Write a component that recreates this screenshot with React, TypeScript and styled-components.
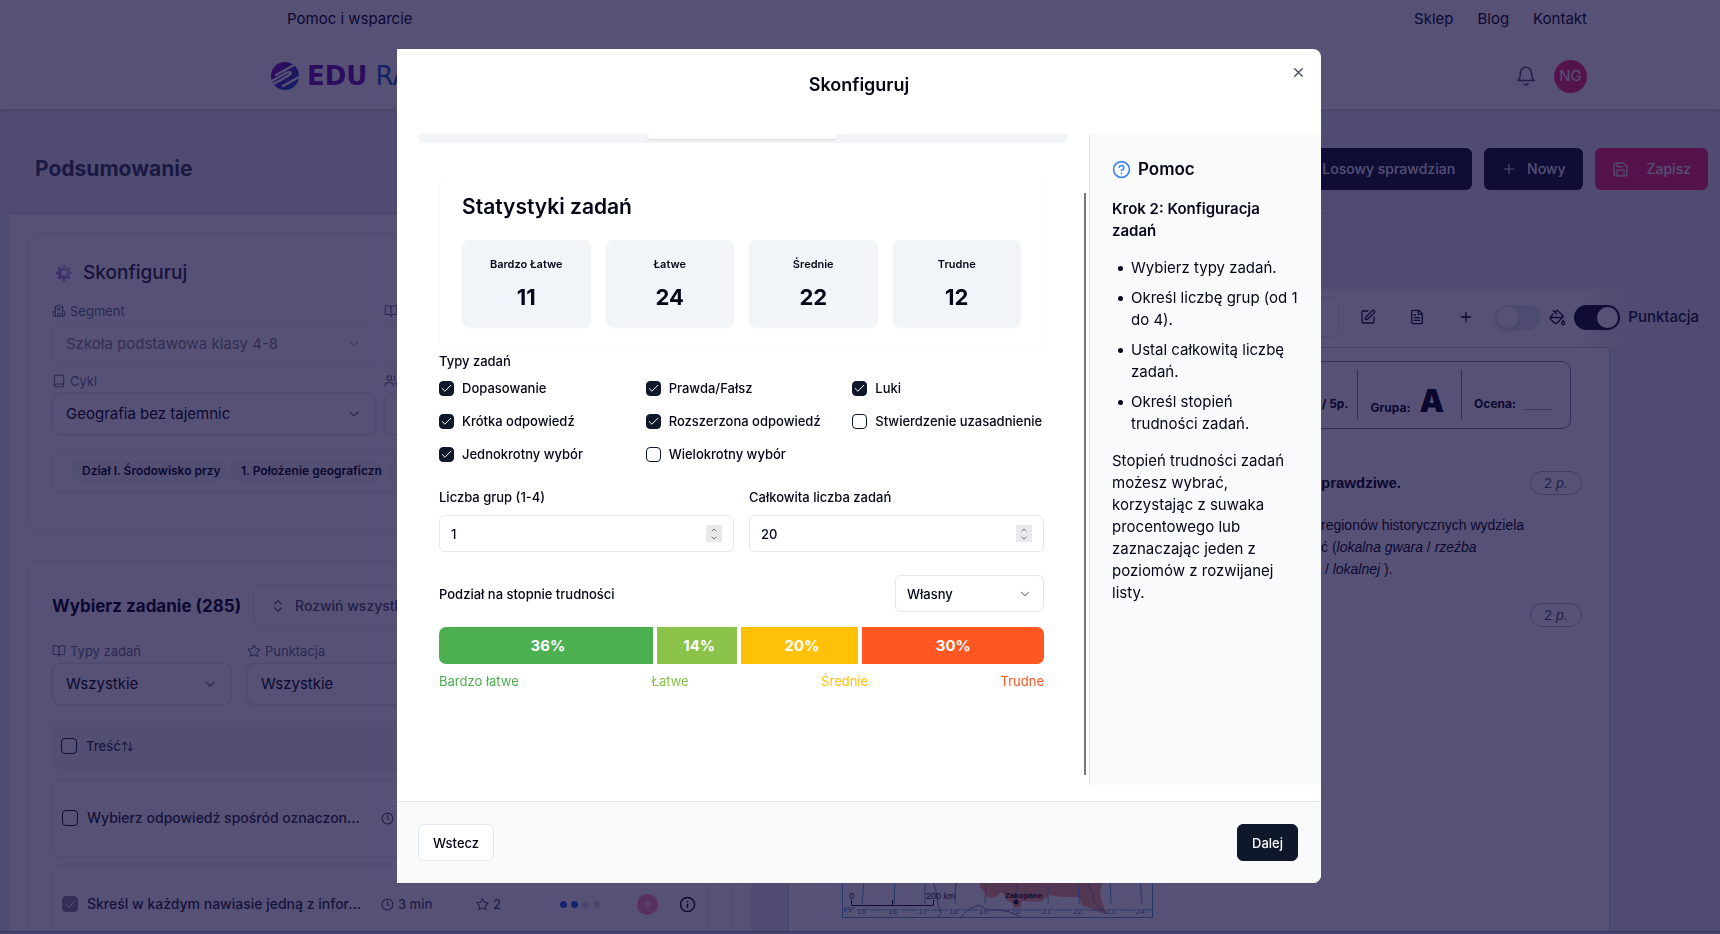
import React, { useState } from "react";
import styled, { createGlobalStyle, css } from "styled-components";
import {
  ArrowUpDown,
  Book,
  BookOpen,
  Check,
  ChevronDown,
  ChevronUp,
  ChevronsUpDown,
  CircleQuestionMark,
  Clock,
  FileText,
  Info,
  PaintBucket,
  Plus,
  Save,
  School,
  SquarePen,
  Star,
  Users,
  X,
} from "lucide-react";

const GlobalStyle = createGlobalStyle`
  *, *::before, *::after { box-sizing: border-box; }
  body {
    margin: 0;
    overflow: hidden;
    background: #e7e8f0;
    color: #020617;
    font-family: Inter, "Liberation Sans", sans-serif;
    font-size: 15px;
    line-height: 22px;
  }
  h1, h2, h3, h4, p, ul { margin: 0; padding: 0; }
  button, input, select { font: inherit; color: inherit; }
  svg { flex-shrink: 0; display: block; }
`;

/* ---------- page ---------- */

const Page = styled.div`
  display: flex;
  flex-direction: column;
  height: 100vh;
  overflow: hidden;
`;

const SiteHeader = styled.header`
  background: #fff;
  border-bottom: 1px solid #d8dde8;
  box-shadow: 0 1px 2px rgba(15, 23, 42, 0.1);
  padding: 0 117px 0 271px;
`;

const TopNav = styled.nav`
  display: flex;
  gap: 24px;
  height: 39px;
  align-items: center;
  padding: 0 16px;
  border-bottom: 1px solid #f3f5f8;

  a { color: #020617; text-decoration: none; }
  a:first-child { margin-right: auto; }
`;

const BrandRow = styled.div`
  display: flex;
  align-items: center;
  justify-content: space-between;
  height: 70px;
  padding: 4px 16px 0 0;
`;

const Brand = styled.a`
  display: flex;
  align-items: center;
  gap: 8px;
  color: #6b16b0;
  text-decoration: none;
  font-family: "DejaVu Sans", sans-serif;
  font-size: 26px;
  font-weight: 700;
`;

const BrandSecond = styled.span`
  color: #1462c4;
  font-weight: 400;
`;

const Account = styled.div`
  display: flex;
  align-items: center;
  gap: 17px;
  color: #475569;
`;

const Avatar = styled.button`
  width: 33px;
  height: 33px;
  padding: 0;
  border: 0;
  border-radius: 50%;
  background: #f52c72;
  color: #fff;
`;

const SummaryBar = styled.div`
  display: flex;
  align-items: center;
  justify-content: space-between;
  height: 104px;
  padding: 15px 12px 0 35px;
  border-bottom: 1px solid #ccd3de;
`;

const SummaryTitle = styled.h1`
  font-size: 21px;
  font-weight: 700;
  line-height: 28px;
  color: #334155;
`;

const ButtonGroup = styled.div`
  display: flex;
  gap: 12px;
`;

const ActionButton = styled.button<{ $pink?: boolean }>`
  display: flex;
  align-items: center;
  gap: ${(p) => (p.$pink ? 18 : 10)}px;
  height: 42px;
  padding: 0 17px;
  border: 0;
  border-radius: 6px;
  background: ${(p) => (p.$pink ? "#f52c72" : "#0f172a")};
  color: #f1f5f9;
  font-size: 14px;
  font-weight: 500;
`;

const Workspace = styled.div`
  display: grid;
  grid-template-columns: 741fr 969fr;
  flex: 1;
  min-height: 0;
  padding-left: 10px;
`;

const Side = styled.div`
  display: flex;
  flex-direction: column;
  gap: 26px;
  min-width: 0;
  overflow: hidden;
  padding: 18px 18px 0 17px;
  background: #fbfcfe;
`;

const Card = styled.section<{ $round: number }>`
  padding: 24px;
  flex-shrink: 0;
  background: #fff;
  border: 1px solid #e8ecf2;
  border-radius: ${(p) => p.$round}px;
`;

const ConfigTitle = styled.h2`
  display: flex;
  align-items: center;
  gap: 10px;
  height: 32px;
  margin-bottom: 12px;
  padding-left: 3px;
  font-size: 19px;
  font-weight: 500;
  color: #1e293b;
`;

const FieldGrid = styled.div<{ $columns: string; $gap: string }>`
  display: grid;
  grid-template-columns: ${(p) => p.$columns};
  gap: ${(p) => p.$gap};
`;

const Field = styled.div`
  display: flex;
  flex-direction: column;
  gap: 2px;
  min-width: 0;
`;

const FieldLabel = styled.label`
  display: flex;
  align-items: center;
  gap: 4px;
  height: 20px;
  font-size: 13px;
  line-height: 20px;
  color: #64748b;
  white-space: nowrap;
`;

const SelectShell = styled.div<{ $size: "large" | "small"; $faded?: boolean }>`
  display: grid;
  align-items: center;
  opacity: ${(p) => (p.$faded ? 0.5 : 1)};

  > * { grid-area: 1 / 1; }
  > svg {
    justify-self: end;
    margin-right: ${(p) => (p.$size === "large" ? 14 : 12)}px;
    pointer-events: none;
    color: #6b7280;
  }
  select {
    appearance: none;
    width: 100%;
    min-width: 0;
    opacity: 1;
    color: #020617;
    background: #fff;
    border: 1px solid #e2e8f0;
    ${(p) =>
      p.$size === "large"
        ? css`
            height: 42px;
            padding: 0 32px 0 13px;
            border-radius: 8px;
            box-shadow: 0 0 0 1px #eef1f5;
          `
        : css`
            height: 37px;
            padding: 0 32px 0 11px;
            border-radius: 6px;
            font-size: 13px;
          `}
  }
`;

const TagBox = styled.div`
  display: flex;
  align-items: center;
  gap: 4px;
  height: 42px;
  margin: 15px 0 17px;
  padding: 0 17px;
  overflow: hidden;
  border: 1px solid #e6eaf0;
  border-radius: 6px;
`;

const Tag = styled.span`
  flex: 0 0 155px;
  height: 22px;
  padding-left: 12px;
  border-radius: 11px;
  background: #f1f5f9;
  font-size: 12px;
  font-weight: 600;
  white-space: nowrap;
`;

const TaskHeading = styled.div`
  display: flex;
  align-items: center;
  gap: 12px;
  margin-bottom: 14px;

  h2 { font-size: 17px; font-weight: 700; }
`;

const ExpandButton = styled.button`
  display: flex;
  align-items: center;
  gap: 9px;
  height: 42px;
  padding: 0 16px;
  border: 1px solid #e2e8f0;
  border-radius: 8px;
  background: #fff;
  color: #475569;
  font-size: 14px;
  font-weight: 500;
`;

const TaskTable = styled.table`
  display: flex;
  flex-direction: column;
  gap: 8px;
  margin-top: 16px;

  thead { display: block; }
  tbody { display: flex; flex-direction: column; gap: 8px; }
  th, td { display: flex; align-items: center; gap: 4px; padding: 0; }
`;

const HeadRow = styled.tr`
  display: flex;
  align-items: center;
  gap: 9px;
  height: 50px;
  padding: 0 9px;
  border-radius: 8px;
  background: #f1f5f9;
  color: #334155;
  font-size: 13px;

  th { font-weight: 500; gap: 0; }
`;

const TaskRow = styled.tr`
  display: grid;
  grid-template-columns: 25px 294px 95px 84px 77px 42px 1fr;
  align-items: center;
  height: 78px;
  padding: 0 9px;
  border: 1px solid #e2e8f0;
  border-radius: 8px;
  font-size: 13px;
  font-weight: 500;
  color: #475569;
`;

const TaskName = styled.td`
  font-size: 14px;
  color: #1e293b;
  white-space: nowrap;
`;

const Dot = styled.i<{ $on?: boolean }>`
  width: 7px;
  height: 7px;
  border-radius: 50%;
  background: ${(p) => (p.$on ? "#2563eb" : "#d3d6de")};
`;

const AddButton = styled.button`
  display: grid;
  place-items: center;
  width: 21px;
  height: 21px;
  padding: 0;
  border: 0;
  border-radius: 50%;
  background: #fd8db6;
  color: #fff;
`;

const IconButton = styled.button<{ $width?: number }>`
  display: grid;
  place-items: center;
  width: ${(p) => p.$width ?? 40}px;
  height: 40px;
  padding: 0;
  border: 0;
  background: none;
  color: inherit;
`;

/* ---------- preview ---------- */

const Preview = styled.div`
  display: flex;
  flex-direction: column;
  min-width: 0;
  padding-top: 75px;
`;

const Toolbar = styled.div`
  display: flex;
  align-items: center;
  justify-content: flex-end;
  gap: 9px;
  height: 59px;
  flex-shrink: 0;
  padding: 0 21px 2px;
  border-bottom: 1px solid #dde2ea;
  background: linear-gradient(to left, #e7e8f0 90px, #fff 150px);
  color: #0f172a;
  font-weight: 500;
`;

const TitleInput = styled.input`
  width: 300px;
  height: 40px;
  border: 1px solid #e2e8f0;
  border-radius: 8px;
  background: #fff;
`;

const SwitchGroup = styled.div`
  display: flex;
  align-items: center;
  gap: 8px;
`;

const Switch = styled.input`
  appearance: none;
  display: flex;
  align-items: center;
  width: 46px;
  height: 25px;
  margin: 0;
  padding: 0 2px;
  border-radius: 13px;
  background: #e2e8f0;

  &::before {
    content: "";
    width: 21px;
    height: 21px;
    border-radius: 50%;
    background: #fff;
    box-shadow: 0 4px 10px rgba(15, 23, 42, 0.12);
  }
  &:checked { background: #0f172a; justify-content: flex-end; }
`;

const Sheet = styled.article`
  flex: 1;
  min-height: 0;
  overflow: hidden;
  margin: 0 111px 0 38px;
  padding: 13px 27px 0 53px;
  background: #fff;
  box-shadow: 0 0 2px #94a3b8;
  font-family: "Liberation Sans", Arial, sans-serif;
`;

const SheetHeader = styled.div`
  display: flex;
  justify-content: flex-end;
  align-items: stretch;
  height: 68px;
  margin: 0 11px 42px 0;
  padding: 8px 0;
  border: 1px solid #7c86a0;
  border-radius: 9px;
  font-family: Inter, sans-serif;
  font-size: 12px;
  font-weight: 700;
`;

const SheetCell = styled.div`
  display: flex;
  align-items: center;
  gap: 9px;
  padding: 18px 9px 0 12px;

  & + & { border-left: 1px solid #7c86a0; }
`;

const GroupCell = styled(SheetCell)`
  align-items: baseline;
  padding-right: 17px;
  padding-top: 20px;

  strong { font-size: 31px; }
`;

const GradeCell = styled(SheetCell)`
  padding-right: 17px;

  &::after {
    content: "";
    width: 28px;
    height: 12px;
    border-bottom: 1px solid #94a3b8;
  }
`;

const Question = styled.section`
  display: flex;
  justify-content: flex-end;
  margin-bottom: 23px;
`;

const QuestionBody = styled.div`
  flex: 0 0 261px;
`;

const QuestionTop = styled.div`
  display: flex;
  justify-content: space-between;
  align-items: center;
  height: 24px;
  font-weight: 700;
`;

const Points = styled.span`
  display: block;
  width: 52px;
  height: 24px;
  margin-left: auto;
  border: 1px solid #b3bac8;
  border-radius: 12px;
  color: #475569;
  font-size: 14px;
  font-weight: 400;
  text-align: center;
`;

const QuestionText = styled.p`
  padding-top: 19px;
  font-size: 14px;
  white-space: nowrap;
`;

const MapFrame = styled.figure`
  margin: 11px 0 0;
`;

const BottomStrip = styled.div`
  height: 3px;
  flex-shrink: 0;
  border-top: 1px solid #a5abc8;
  background: #c6cbee;
`;

/* ---------- dialog ---------- */

const Overlay = styled.div`
  position: fixed;
  inset: 0;
  display: flex;
  justify-content: center;
  padding: 49px 18px 51px 16px;
  background: rgba(16, 8, 59, 0.7);
`;

const Dialog = styled.div`
  display: flex;
  flex-direction: column;
  width: 100%;
  max-width: 924px;
  overflow: hidden;
  border-radius: 0 8px 8px 0;
  background: #fff;
`;

const DialogHeader = styled.div`
  display: grid;
  grid-template-columns: 40px 1fr 40px;
  height: 85px;
  flex-shrink: 0;
  padding: 8px 3px;

  h2 {
    align-self: center;
    padding-bottom: 14px;
    text-align: center;
    font-size: 18px;
    font-weight: 600;
  }
`;

const CloseButton = styled.button`
  display: grid;
  place-items: center;
  justify-self: end;
  width: 30px;
  height: 30px;
  margin-right: 5px;
  padding: 0;
  border: 0;
  background: none;
  color: #3f4454;
`;

const DialogBody = styled.div`
  display: flex;
  flex: 1;
  min-height: 0;
  margin-bottom: 16px;
`;

const FormPane = styled.div`
  flex: 1;
  min-width: 0;
  padding: 0 17px 0 21px;
  overflow: hidden;
`;

const ScrollThumb = styled.div`
  width: 2px;
  margin: 59px 3px 10px 0;
  background: #77777c;
`;

const TabBar = styled.div`
  display: flex;
  justify-content: center;
  height: 9px;
  padding-right: 2px;
  border-radius: 0 0 6px 6px;
  background: #f1f5f9;
`;

const ActiveTab = styled.div`
  width: 190px;
  height: 5px;
  border-radius: 0 0 4px 4px;
  background: #fff;
  box-shadow: 0 1px 2px rgba(15, 23, 42, 0.12);
`;

const Form = styled.form`
  display: flex;
  flex-direction: column;
  margin: 34px 23px 0 21px;
  font-size: 13px;
  line-height: 20px;
  font-weight: 500;
`;

const StatsCard = styled.section`
  padding: 16px 22px 23px;
  border: 1px solid #f9fafb;
  border-top-color: #fff;
  border-radius: 8px;

  h3 {
    margin-bottom: 20px;
    font-size: 21px;
    line-height: 26px;
    font-weight: 600;
  }
`;

const StatGrid = styled.div`
  display: grid;
  grid-template-columns: repeat(4, 1fr);
  gap: 15px;
`;

const Stat = styled.div`
  display: flex;
  flex-direction: column;
  align-items: center;
  gap: 9px;
  height: 87px;
  padding-top: 14px;
  border-radius: 8px;
  background: #f1f5f9;
  box-shadow: 0 1px 2px rgba(15, 23, 42, 0.05);
  font-size: 11px;
  font-weight: 600;

  strong { font-size: 22px; line-height: 28px; font-weight: 700; }
`;

const TypeGrid = styled.fieldset`
  display: grid;
  grid-template-columns: repeat(3, 1fr);
  gap: 13px 15px;
  margin: 0 0 23px;
  padding: 0;
  border: 0;

  legend { float: left; grid-column: 1 / -1; margin-bottom: -6px; padding: 0; }
`;

const CheckLabel = styled.label`
  display: flex;
  align-items: center;
  gap: 8px;
  white-space: nowrap;
`;

const CheckShell = styled.span<{ $size: number; $faded?: boolean }>`
  display: grid;
  place-items: center;
  opacity: ${(p) => (p.$faded ? 0.5 : 1)};

  > * { grid-area: 1 / 1; }
  > svg { color: #fff; pointer-events: none; }
  input {
    appearance: none;
    width: ${(p) => p.$size}px;
    height: ${(p) => p.$size}px;
    margin: 0;
    border: 1px solid #0f172a;
    border-radius: 4px;
    background: #fff;
  }
  input:checked { background: #0f172a; }
`;

const NumberField = styled.div`
  display: flex;
  flex-direction: column;
  gap: 8px;
`;

const NumberShell = styled.div`
  display: grid;
  align-items: center;

  > * { grid-area: 1 / 1; }
  input {
    appearance: textfield;
    width: 100%;
    height: 37px;
    padding: 0 32px 0 11px;
    border: 1px solid #e2e8f0;
    border-radius: 6px;
  }
  input::-webkit-inner-spin-button { appearance: none; }
`;

const Spinner = styled.span`
  display: flex;
  flex-direction: column;
  align-items: center;
  justify-content: center;
  justify-self: end;
  width: 16px;
  height: 17px;
  margin-right: 12px;
  background: #e9e9eb;
  color: #6f6f78;
`;

const SplitRow = styled.div`
  display: flex;
  align-items: center;
  justify-content: space-between;
  margin: 23px 0 15px;
`;

const SplitSelect = styled.div`
  width: 149px;
`;

const Bar = styled.div`
  display: flex;
  height: 37px;
  overflow: hidden;
  border-radius: 7px;
  color: #fff;
  font-size: 15px;
  font-weight: 700;
`;

const Segment = styled.div<{ $share: number; $color: string }>`
  display: grid;
  place-items: center;
  flex: 0 0 ${(p) => p.$share}%;
  background: ${(p) => p.$color};

  &:not(:last-child) { box-shadow: inset -4px 0 #fff; }
`;

const Legend = styled.div`
  display: flex;
  justify-content: space-between;
  margin-top: 7px;
  font-weight: 400;
`;

const LegendName = styled.span<{ $color: string }>`
  color: ${(p) => p.$color};
`;

const Help = styled.aside`
  flex: 0 0 232px;
  padding: 21px 20px 0 22px;
  border-left: 1px solid #e2e8f0;
  background: #f8fafc;

  h3 {
    display: flex;
    align-items: center;
    gap: 7px;
    height: 28px;
    font-size: 17px;
    font-weight: 600;
  }
  h4 { margin: 15px 0; font-size: 15px; font-weight: 600; }
`;

const HelpList = styled.ul`
  display: flex;
  flex-direction: column;
  gap: 8px;
  margin-bottom: 15px;
  padding-left: 6px;
  list-style: none;

  li { display: flex; gap: 8px; }
  li::before {
    content: "";
    flex: 0 0 5px;
    height: 5px;
    margin-top: 9px;
    border-radius: 50%;
    background: #020617;
  }
`;

const DialogFooter = styled.div`
  display: flex;
  align-items: center;
  justify-content: space-between;
  height: 82px;
  flex-shrink: 0;
  padding: 0 23px 0 21px;
  border-top: 1px solid #e2e8f0;
  background: #f8fafc;
`;

const FooterButton = styled.button<{ $primary?: boolean }>`
  height: 37px;
  padding: 0 14px;
  border: 1px solid ${(p) => (p.$primary ? "#0f172a" : "#e2e8f0")};
  border-radius: 6px;
  background: ${(p) => (p.$primary ? "#0f172a" : "#fff")};
  color: ${(p) => (p.$primary ? "#f8fafc" : "#020617")};
  font-size: 13px;
  font-weight: 500;
`;

/* ---------- drawings ---------- */

const LogoMark = () => (
  <svg width="28" height="28" viewBox="0 0 28 28" aria-hidden="true">
    <defs>
      <linearGradient id="logo-fill" x1="0" y1="0" x2="1" y2="1">
        <stop offset="0.2" stopColor="#7a14ae" />
        <stop offset="0.8" stopColor="#1a4fc0" />
      </linearGradient>
      <clipPath id="logo-clip"><circle cx="14" cy="14" r="14" /></clipPath>
    </defs>
    <circle cx="14" cy="14" r="14" fill="url(#logo-fill)" />
    <path
      d="M-1 20 L16 10.500 Q20 9 19.500 12 L10 18 M23 3 L5 13 M30 14 L12 24 M10 18 L0 23"
      clipPath="url(#logo-clip)"
      fill="none"
      stroke="#fff"
      strokeWidth="2.200"
      strokeLinecap="round"
    />
  </svg>
);

const BellIcon = () => (
  <svg width="22" height="22" viewBox="0 0 24 24" fill="none" stroke="currentColor" strokeWidth="1.7" strokeLinecap="round" strokeLinejoin="round" aria-hidden="true">
    <path d="M6 8.500a6 6 0 0 1 12 0c0 6 3 8.500 3 8.500H3s3-2.500 3-8.500" />
    <path d="M10 20.500a2.200 2.200 0 0 0 4 0" />
  </svg>
);

const GearIcon = () => (
  <svg width="18" height="18" viewBox="0 0 20 20" aria-hidden="true">
    <defs>
      <linearGradient id="gear-fill" x1="0" y1="1" x2="1" y2="0">
        <stop offset="0" stopColor="#9a7fcc" />
        <stop offset="1" stopColor="#cbbde6" />
      </linearGradient>
    </defs>
    <g stroke="url(#gear-fill)" strokeWidth="3.400" strokeLinecap="round">
      <path d="M10 2.600V17.401 M2.600 10H17.401 M4.800 4.800L15.200 15.201 M15.200 4.800L4.800 15.201" />
    </g>
    <circle cx="10" cy="10" r="4.700" fill="#fff" stroke="url(#gear-fill)" strokeWidth="3.400" />
  </svg>
);

const MERIDIANS = [21, 52, 82, 113, 143, 175, 206, 237, 270, 300];

const MapDrawing = () => (
  <svg width="311" height="280" viewBox="0 0 311 280" fontFamily="Liberation Sans, sans-serif" role="img" aria-label="Mapa">
    <rect x="0.5" y="0.5" width="310" height="279" fill="#fbfdff" stroke="#58a6dd" />
    <path
      d="M137 240L138 248L145 259L152 260L160 254L165 262L170 265L172 270L178 270L180 263L199 264L207 257L219 259L237 259L240 267L257 274L265 276L260 265L258 255L261 240Z"
      fill="#f5a58c"
    />
    <g fill="none" stroke="#58a6dd" strokeWidth="1">
      <path d="M22 240L20 266 M53 240L52 266 M83 240V266 M114 240L113 266 M144 240L143 266 M175 240V266 M206 240V266 M236 240L237 266 M268 240L269 266 M298 240L300 266" />
      <path d="M14 272H15 M28 272H45 M59 272H75 M89 272H106 M120 272H136 M150 272H168 M182 272H199 M213 272H230 M244 272H262 M277 272H293 M306 272H311" />
    </g>
    <g fill="none" stroke="#7a86a8" strokeWidth="1">
      <path d="M90 240L94 253L96 266L99 275L96 280 M113 249L117 240 M118 280L126 272L137 267L146 272L158 272L168 274L180 280 M243 240L250 254L252 264L265 276" />
    </g>
    <path d="M9.500 262V267.500H91.500V262 M50.500 262V267" fill="none" stroke="#1e1b3a" />
    <g fontSize="9" fill="#1e1b3a">
      <text x="7" y="261">0</text>
      <text x="84" y="261">200 km</text>
    </g>
    <text x="163" y="260" fontSize="8" fontWeight="700" fill="#12102a">Zakopane</text>
    <circle cx="174" cy="264" r="2.500" fill="#12102a" />
    <g fontSize="8" fill="#2b86cc" textAnchor="middle">
      <text x="7" y="274">49°</text>
      {MERIDIANS.map((x, i) => (
        <text key={x} x={x} y="276">{15 + i}°</text>
      ))}
    </g>
  </svg>
);

/* ---------- small parts ---------- */

type SelectProps = { id: string; value: string; size: "large" | "small"; disabled?: boolean };

const Select = ({ id, value, size, disabled }: SelectProps) => (
  <SelectShell $size={size} $faded={disabled}>
    <select id={id} disabled={disabled} defaultValue={value}>
      <option>{value}</option>
    </select>
    <ChevronDown size={size === "large" ? 16 : 14} strokeWidth={1.8} />
  </SelectShell>
);

type TickProps = { checked: boolean; size?: number; faded?: boolean; label?: string };

const Tick = ({ checked, size = 15, faded, label }: TickProps) => {
  const [on, setOn] = useState(checked);
  return (
    <CheckShell $size={size} $faded={faded}>
      <input type="checkbox" checked={on} aria-label={label} onChange={() => setOn(!on)} />
      {on && <Check size={13} strokeWidth={1.8} />}
    </CheckShell>
  );
};

const NumberInput = ({ id, label, value }: { id: string; label: string; value: number }) => (
  <NumberField>
    <label htmlFor={id}>{label}</label>
    <NumberShell>
      <input id={id} type="number" defaultValue={value} />
      <Spinner>
        <ChevronUp size={8} strokeWidth={3} />
        <ChevronDown size={8} strokeWidth={3} />
      </Spinner>
    </NumberShell>
  </NumberField>
);

const STATS = [
  { name: "Bardzo Łatwe", count: 11 },
  { name: "Łatwe", count: 24 },
  { name: "Średnie", count: 22 },
  { name: "Trudne", count: 12 },
];

const TYPES = [
  { name: "Dopasowanie", on: true },
  { name: "Prawda/Fałsz", on: true },
  { name: "Luki", on: true },
  { name: "Krótka odpowiedź", on: true },
  { name: "Rozszerzona odpowiedź", on: true },
  { name: "Stwierdzenie uzasadnienie", on: false },
  { name: "Jednokrotny wybór", on: true },
  { name: "Wielokrotny wybór", on: false },
];

const LEVELS = [
  { name: "Bardzo łatwe", share: 36, color: "#4caf50" },
  { name: "Łatwe", share: 14, color: "#8bc34a" },
  { name: "Średnie", share: 20, color: "#ffc107" },
  { name: "Trudne", share: 30, color: "#ff5722" },
];

const TASKS = [
  { text: "Wybierz odpowiedź spośród oznaczon...", on: false },
  { text: "Skreśl w każdym nawiasie jedną z infor...", on: true },
];

const ConfigCard = () => (
  <Card $round={16}>
    <ConfigTitle><GearIcon />Skonfiguruj</ConfigTitle>
    <FieldGrid $columns="1fr 1fr" $gap="6px 8px">
      <Field>
        <FieldLabel htmlFor="segment"><School size={14} strokeWidth={1.8} />Segment</FieldLabel>
        <Select id="segment" value="Szkoła podstawowa klasy 4-8" size="large" disabled />
      </Field>
      <Field>
        <FieldLabel htmlFor="subject"><BookOpen size={14} strokeWidth={1.8} />Przedmiot</FieldLabel>
        <Select id="subject" value="Geografia" size="large" disabled />
      </Field>
      <Field>
        <FieldLabel htmlFor="series"><Book size={14} strokeWidth={1.8} />Cykl</FieldLabel>
        <Select id="series" value="Geografia bez tajemnic" size="large" />
      </Field>
      <Field>
        <FieldLabel htmlFor="grade"><Users size={14} strokeWidth={1.8} />Klasa</FieldLabel>
        <Select id="grade" value="Klasa 5" size="large" />
      </Field>
    </FieldGrid>
    <TagBox>
      <Tag>Dział I. Środowisko przy</Tag>
      <Tag>1. Położenie geograficzn</Tag>
      <Tag />
    </TagBox>
  </Card>
);

const TaskCard = () => (
  <Card $round={12}>
    <TaskHeading>
      <h2>Wybierz zadanie (285)</h2>
      <ExpandButton type="button"><ChevronsUpDown size={16} strokeWidth={1.7} />Rozwiń wszystkie</ExpandButton>
    </TaskHeading>
    <FieldGrid $columns="180px 180px 1fr" $gap="15px">
      <Field>
        <FieldLabel htmlFor="kind"><BookOpen size={14} strokeWidth={1.8} />Typy zadań</FieldLabel>
        <Select id="kind" value="Wszystkie" size="large" />
      </Field>
      <Field>
        <FieldLabel htmlFor="points"><Star size={14} strokeWidth={1.8} />Punktacja</FieldLabel>
        <Select id="points" value="Wszystkie" size="large" />
      </Field>
    </FieldGrid>
    <TaskTable>
      <thead>
        <HeadRow>
          <th><Tick checked={false} size={16} label="Zaznacz wszystkie" /></th>
          <th>Treść<ArrowUpDown size={13} /></th>
        </HeadRow>
      </thead>
      <tbody>
        {TASKS.map((task) => (
          <TaskRow key={task.text}>
            <td><Tick checked={task.on} faded={task.on} size={16} label={task.text} /></td>
            <TaskName>{task.text}</TaskName>
            <td><Clock size={13} />3 min</td>
            <td><Star size={13} />2</td>
            <td><Dot $on /><Dot $on /><Dot /><Dot /></td>
            <td><AddButton type="button" aria-label="Dodaj"><Plus size={12} /></AddButton></td>
            <td><IconButton type="button" $width={16} aria-label="Informacje"><Info size={17} color="#020617" /></IconButton></td>
          </TaskRow>
        ))}
      </tbody>
    </TaskTable>
  </Card>
);

const PreviewPane = () => (
  <Preview>
    <Toolbar>
      <TitleInput aria-label="Tytuł" />
      <IconButton type="button" aria-label="Edytuj"><SquarePen size={16} /></IconButton>
      <IconButton type="button" aria-label="Dokument"><FileText size={16} /></IconButton>
      <IconButton type="button" aria-label="Dodaj"><Plus size={16} /></IconButton>
      <SwitchGroup>
        <Switch type="checkbox" role="switch" aria-label="Kolor" />
        <PaintBucket size={17} />
        <Switch type="checkbox" role="switch" id="score" defaultChecked />
        <label htmlFor="score">Punktacja</label>
      </SwitchGroup>
    </Toolbar>
    <Sheet>
      <SheetHeader>
        <SheetCell>/ 5p.</SheetCell>
        <GroupCell>Grupa: <strong>A</strong></GroupCell>
        <GradeCell>Ocena:</GradeCell>
      </SheetHeader>
      <Question>
        <QuestionBody>
          <QuestionTop>prawdziwe.<Points>2 <em>p.</em></Points></QuestionTop>
          <QuestionText>
            regionów historycznych wydziela<br />
            ć (<em>lokalna gwara</em> / <em>rzeźba</em><br />
            {"\u00a0"}/ <em>lokalnej</em> ).
          </QuestionText>
        </QuestionBody>
      </Question>
      <Points>2 <em>p.</em></Points>
      <MapFrame><MapDrawing /></MapFrame>
    </Sheet>
  </Preview>
);

const ConfigDialog = () => (
  <Overlay>
    <Dialog role="dialog" aria-modal="true" aria-labelledby="dialog-title">
      <DialogHeader>
        <span />
        <h2 id="dialog-title">Skonfiguruj</h2>
        <CloseButton type="button" aria-label="Zamknij"><X size={15} strokeWidth={2} /></CloseButton>
      </DialogHeader>
      <DialogBody>
        <FormPane>
          <TabBar><ActiveTab /></TabBar>
          <Form>
            <StatsCard>
              <h3>Statystyki zadań</h3>
              <StatGrid>
                {STATS.map((s) => (
                  <Stat key={s.name}>{s.name}<strong>{s.count}</strong></Stat>
                ))}
              </StatGrid>
            </StatsCard>
            <TypeGrid>
              <legend>Typy zadań</legend>
              {TYPES.map((t) => (
                <CheckLabel key={t.name}><Tick checked={t.on} />{t.name}</CheckLabel>
              ))}
            </TypeGrid>
            <FieldGrid $columns="1fr 1fr" $gap="15px">
              <NumberInput id="groups" label="Liczba grup (1-4)" value={1} />
              <NumberInput id="total" label="Całkowita liczba zadań" value={20} />
            </FieldGrid>
            <SplitRow>
              <label htmlFor="split">Podział na stopnie trudności</label>
              <SplitSelect><Select id="split" value="Własny" size="small" /></SplitSelect>
            </SplitRow>
            <Bar>
              {LEVELS.map((l) => (
                <Segment key={l.name} $share={l.share} $color={l.color}>{l.share}%</Segment>
              ))}
            </Bar>
            <Legend>
              {LEVELS.map((l) => (
                <LegendName key={l.name} $color={l.color}>{l.name}</LegendName>
              ))}
            </Legend>
          </Form>
        </FormPane>
        <ScrollThumb />
        <Help>
          <h3><CircleQuestionMark size={19} color="#3b82f6" strokeWidth={2} />Pomoc</h3>
          <h4>Krok 2: Konfiguracja zadań</h4>
          <HelpList>
            <li>Wybierz typy zadań.</li>
            <li>Określ liczbę grup (od 1 do 4).</li>
            <li>Ustal całkowitą liczbę zadań.</li>
            <li>Określ stopień trudności zadań.</li>
          </HelpList>
          <p>
            Stopień trudności zadań możesz wybrać, korzystając z suwaka procentowego lub
            zaznaczając jeden z poziomów z rozwijanej listy.
          </p>
        </Help>
      </DialogBody>
      <DialogFooter>
        <FooterButton type="button">Wstecz</FooterButton>
        <FooterButton type="button" $primary>Dalej</FooterButton>
      </DialogFooter>
    </Dialog>
  </Overlay>
);

export default function App() {
  return (
    <>
      <GlobalStyle />
      <Page>
        <SiteHeader>
          <TopNav>
            <a href="#pomoc">Pomoc i wsparcie</a>
            <a href="#sklep">Sklep</a>
            <a href="#blog">Blog</a>
            <a href="#kontakt">Kontakt</a>
          </TopNav>
          <BrandRow>
            <Brand href="#start"><LogoMark /><span>EDU</span><BrandSecond>RA</BrandSecond></Brand>
            <Account><BellIcon /><Avatar type="button">NG</Avatar></Account>
          </BrandRow>
        </SiteHeader>
        <SummaryBar>
          <SummaryTitle>Podsumowanie</SummaryTitle>
          <ButtonGroup>
            <ActionButton type="button">Losowy sprawdzian</ActionButton>
            <ActionButton type="button"><Plus size={16} strokeWidth={1.7} />Nowy</ActionButton>
            <ActionButton type="button" $pink><Save size={17} strokeWidth={1.7} />Zapisz</ActionButton>
          </ButtonGroup>
        </SummaryBar>
        <Workspace>
          <Side><ConfigCard /><TaskCard /></Side>
          <PreviewPane />
        </Workspace>
        <BottomStrip />
      </Page>
      <ConfigDialog />
    </>
  );
}
